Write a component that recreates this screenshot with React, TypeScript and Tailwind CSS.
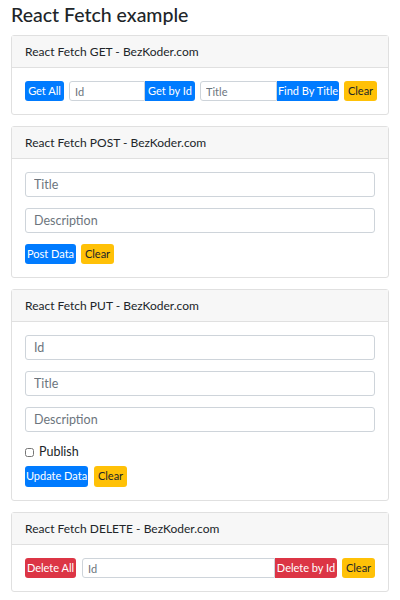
const font = { fontFamily: 'Lato, "Noto Sans", sans-serif' };

function Card({ title, children }: { title: string; children: React.ReactNode }) {
  return (
    <div className="rounded-[3px] border border-[#e0e0e0] bg-white">
      <div className="flex h-[32px] items-center border-b border-[#e0e0e0] bg-[#f7f7f7] px-[13px] text-[12px] text-[#212529]">
        {title}
      </div>
      <div className="px-[13px] py-[13px]">{children}</div>
    </div>
  );
}

function Btn({ label, color, cls = "" }: { label: string; color: "blue" | "yellow" | "red"; cls?: string }) {
  const c =
    color === "blue"
      ? "bg-[#007bff] text-white"
      : color === "red"
        ? "bg-[#dc3545] text-white"
        : "bg-[#ffc107] text-[#212529]";
  return (
    <button className={`flex h-[20px] items-center justify-center whitespace-nowrap px-[6px] text-[11px] ${c} ${cls}`}>
      {label}
    </button>
  );
}

function Input({ ph }: { ph: string }) {
  return (
    <input
      placeholder={ph}
      className="block h-[25px] w-full rounded-[3px] border border-[#ced4da] px-[8px] text-[12.5px] text-[#495057] placeholder:text-[#6c757d] outline-none"
    />
  );
}

export default function App() {
  return (
    <div className="min-h-[600px] bg-white px-[11px]" style={font}>
      <h3 className="pt-[2px] pb-[7px] text-[19.5px] font-medium leading-[26px] text-[#212529]">React Fetch example</h3>

      <div className="flex flex-col gap-[11px]">
        <Card title="React Fetch GET - BezKoder.com">
          <div className="flex items-center">
            <Btn label="Get All" color="blue" cls="rounded-[3px] w-[39px]" />
            <div className="ml-[5px] flex">
              <input
                placeholder="Id"
                className="h-[20px] w-[76px] rounded-l-[3px] border border-[#ced4da] px-[5px] text-[11px] placeholder:text-[#6c757d] outline-none"
              />
              <Btn label="Get by Id" color="blue" cls="rounded-r-[3px] w-[50px]" />
            </div>
            <div className="ml-[5px] flex">
              <input
                placeholder="Title"
                className="h-[20px] w-[77px] rounded-l-[3px] border border-[#ced4da] px-[5px] text-[11px] placeholder:text-[#6c757d] outline-none"
              />
              <Btn label="Find By Title" color="blue" cls="rounded-r-[3px] w-[62px]" />
            </div>
            <Btn label="Clear" color="yellow" cls="ml-[5px] rounded-[3px] w-[33px]" />
          </div>
        </Card>

        <Card title="React Fetch POST - BezKoder.com">
          <div className="flex flex-col gap-[11px]">
            <Input ph="Title" />
            <Input ph="Description" />
            <div className="flex gap-[5px]">
              <Btn label="Post Data" color="blue" cls="rounded-[3px] w-[51px]" />
              <Btn label="Clear" color="yellow" cls="rounded-[3px] w-[33px]" />
            </div>
          </div>
        </Card>

        <Card title="React Fetch PUT - BezKoder.com">
          <div className="flex flex-col gap-[11px]">
            <Input ph="Id" />
            <Input ph="Title" />
            <Input ph="Description" />
          </div>
          <label className="mt-[8px] flex h-[24px] items-center gap-[5px] text-[12.5px] text-[#212529]">
            <input type="checkbox" className="h-[9px] w-[9px]" />
            Publish
          </label>
          <div className="mt-[2px] flex gap-[6px]">
            <Btn label="Update Data" color="blue" cls="rounded-[3px] w-[63px] h-[21px]" />
            <Btn label="Clear" color="yellow" cls="rounded-[3px] w-[33px] h-[21px]" />
          </div>
        </Card>

        <Card title="React Fetch DELETE - BezKoder.com">
          <div className="flex items-center">
            <Btn label="Delete All" color="red" cls="rounded-[3px] w-[51px]" />
            <div className="ml-[6px] flex flex-1">
              <input
                placeholder="Id"
                className="h-[20px] min-w-0 flex-1 rounded-l-[3px] border border-[#ced4da] px-[5px] text-[11px] placeholder:text-[#6c757d] outline-none"
              />
              <Btn label="Delete by Id" color="red" cls="rounded-r-[3px] w-[62px]" />
            </div>
            <Btn label="Clear" color="yellow" cls="ml-[5px] rounded-[3px] w-[33px]" />
          </div>
        </Card>
      </div>
    </div>
  );
}
